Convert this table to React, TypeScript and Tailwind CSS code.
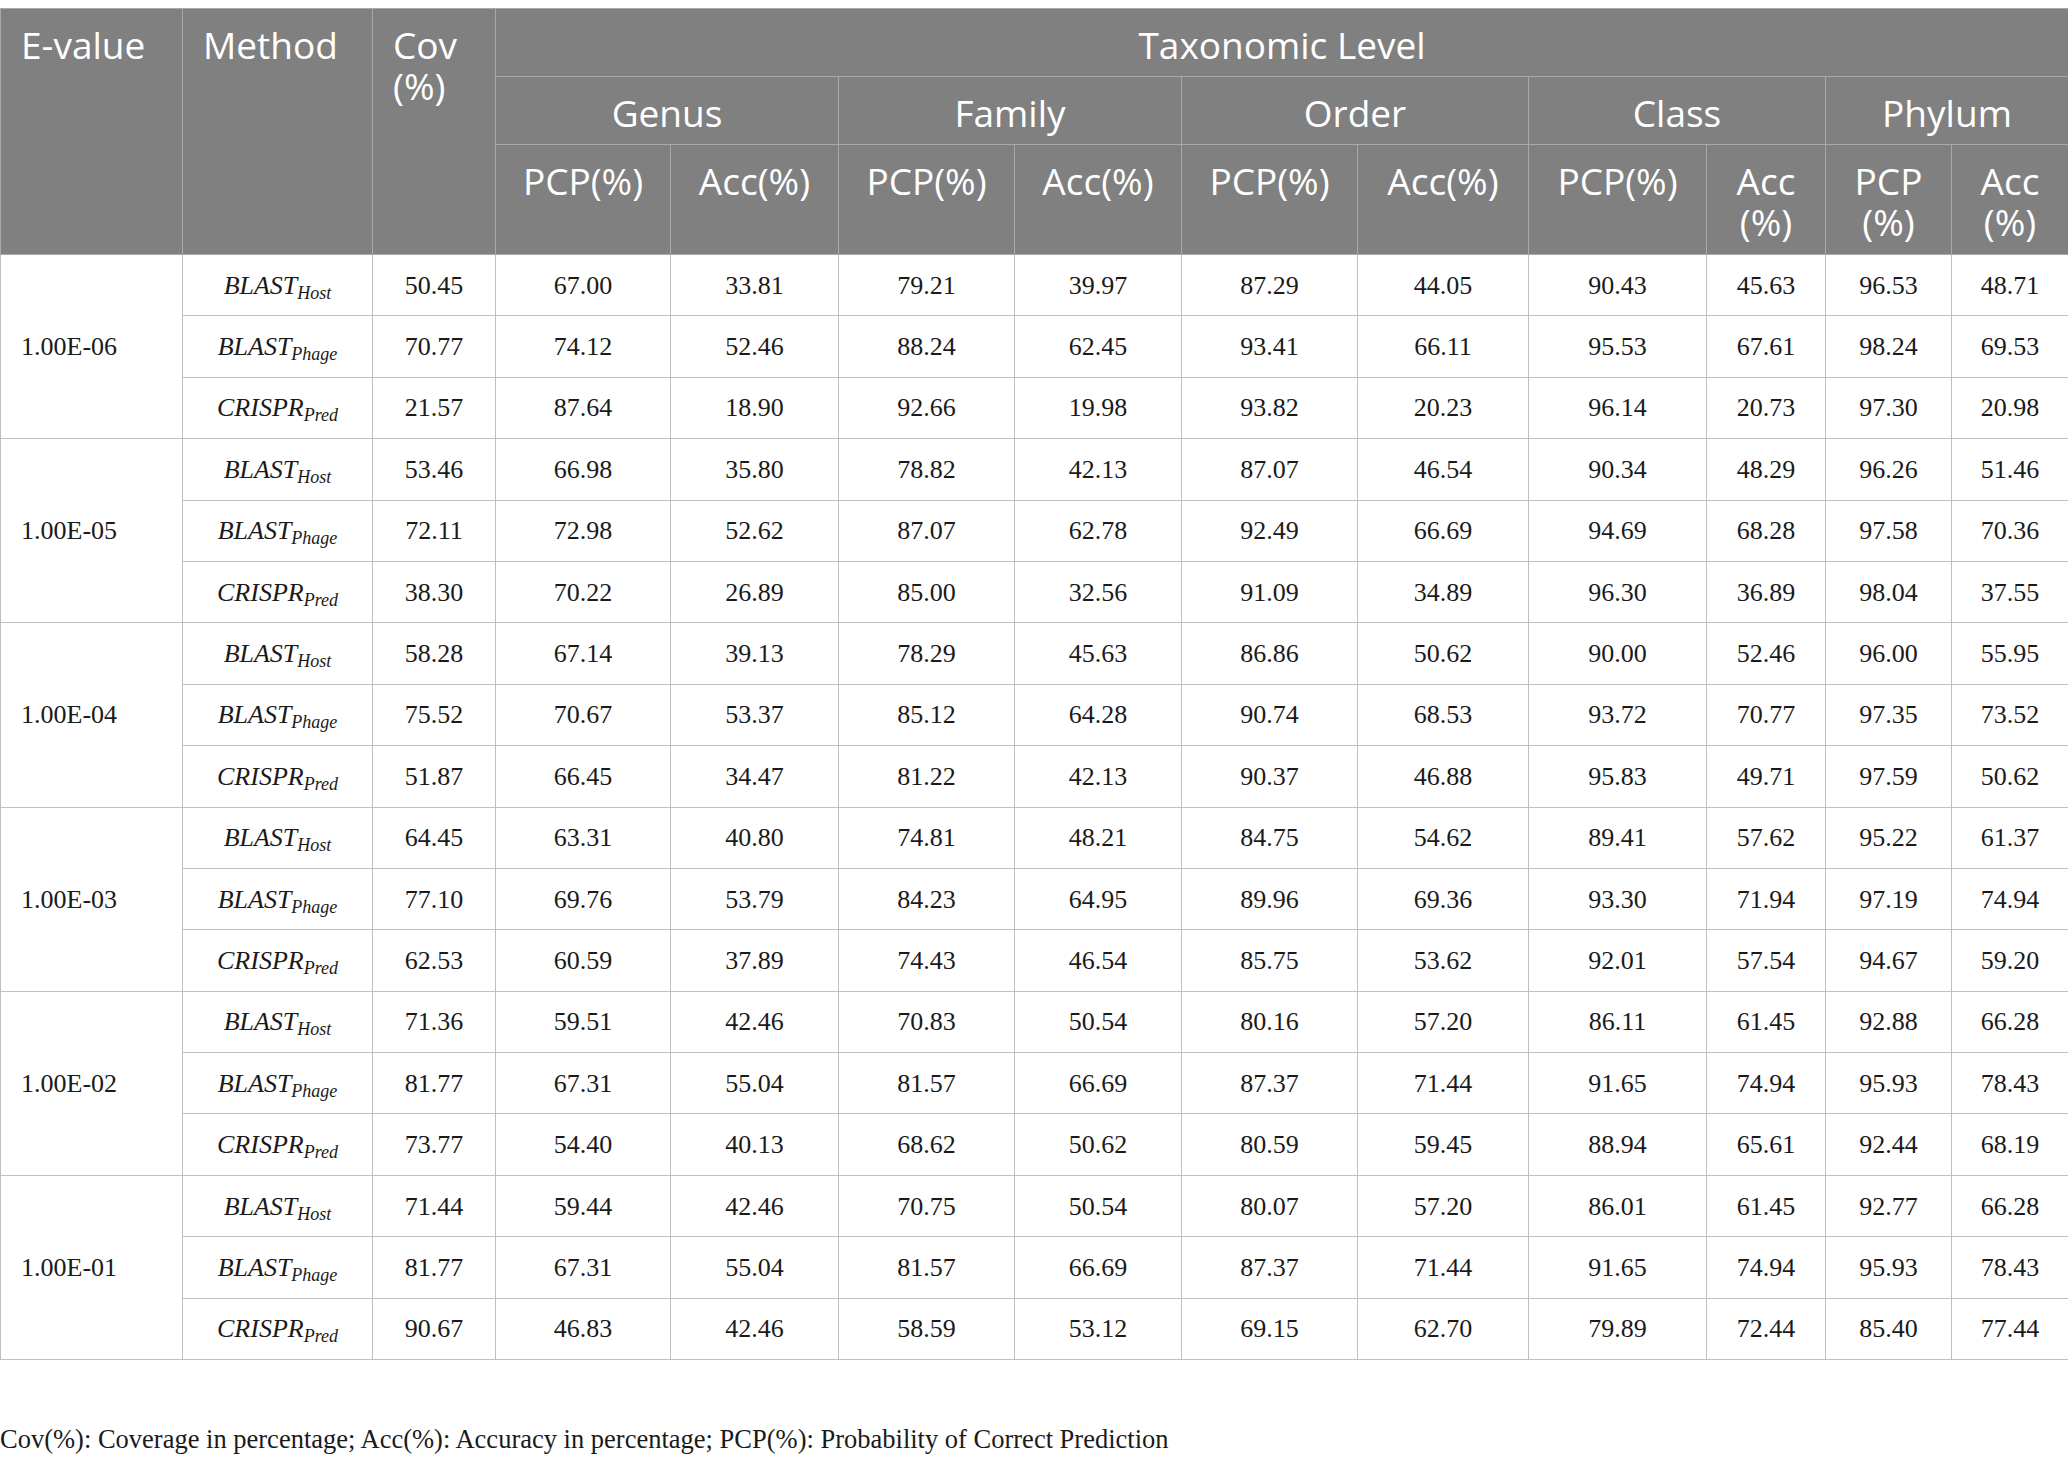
const rows: { evalue: string; data: string[][] }[] = [
  {
    evalue: '1.00E-06',
    data: [
      ['50.45', '67.00', '33.81', '79.21', '39.97', '87.29', '44.05', '90.43', '45.63', '96.53', '48.71'],
      ['70.77', '74.12', '52.46', '88.24', '62.45', '93.41', '66.11', '95.53', '67.61', '98.24', '69.53'],
      ['21.57', '87.64', '18.90', '92.66', '19.98', '93.82', '20.23', '96.14', '20.73', '97.30', '20.98'],
    ],
  },
  {
    evalue: '1.00E-05',
    data: [
      ['53.46', '66.98', '35.80', '78.82', '42.13', '87.07', '46.54', '90.34', '48.29', '96.26', '51.46'],
      ['72.11', '72.98', '52.62', '87.07', '62.78', '92.49', '66.69', '94.69', '68.28', '97.58', '70.36'],
      ['38.30', '70.22', '26.89', '85.00', '32.56', '91.09', '34.89', '96.30', '36.89', '98.04', '37.55'],
    ],
  },
  {
    evalue: '1.00E-04',
    data: [
      ['58.28', '67.14', '39.13', '78.29', '45.63', '86.86', '50.62', '90.00', '52.46', '96.00', '55.95'],
      ['75.52', '70.67', '53.37', '85.12', '64.28', '90.74', '68.53', '93.72', '70.77', '97.35', '73.52'],
      ['51.87', '66.45', '34.47', '81.22', '42.13', '90.37', '46.88', '95.83', '49.71', '97.59', '50.62'],
    ],
  },
  {
    evalue: '1.00E-03',
    data: [
      ['64.45', '63.31', '40.80', '74.81', '48.21', '84.75', '54.62', '89.41', '57.62', '95.22', '61.37'],
      ['77.10', '69.76', '53.79', '84.23', '64.95', '89.96', '69.36', '93.30', '71.94', '97.19', '74.94'],
      ['62.53', '60.59', '37.89', '74.43', '46.54', '85.75', '53.62', '92.01', '57.54', '94.67', '59.20'],
    ],
  },
  {
    evalue: '1.00E-02',
    data: [
      ['71.36', '59.51', '42.46', '70.83', '50.54', '80.16', '57.20', '86.11', '61.45', '92.88', '66.28'],
      ['81.77', '67.31', '55.04', '81.57', '66.69', '87.37', '71.44', '91.65', '74.94', '95.93', '78.43'],
      ['73.77', '54.40', '40.13', '68.62', '50.62', '80.59', '59.45', '88.94', '65.61', '92.44', '68.19'],
    ],
  },
  {
    evalue: '1.00E-01',
    data: [
      ['71.44', '59.44', '42.46', '70.75', '50.54', '80.07', '57.20', '86.01', '61.45', '92.77', '66.28'],
      ['81.77', '67.31', '55.04', '81.57', '66.69', '87.37', '71.44', '91.65', '74.94', '95.93', '78.43'],
      ['90.67', '46.83', '42.46', '58.59', '53.12', '69.15', '62.70', '79.89', '72.44', '85.40', '77.44'],
    ],
  },
];

const methods: [string, string][] = [
  ['BLAST', 'Host'],
  ['BLAST', 'Phage'],
  ['CRISPR', 'Pred'],
];

const colWidths = [182, 190, 123, 175, 168, 176, 167, 176, 171, 178, 119, 126, 117];

const levels = ['Genus', 'Family', 'Order', 'Class', 'Phylum'];

export default function App() {
  const th = 'border border-[#a9a9a9] align-top font-normal pt-[15px] px-[20px]';
  const td = 'border border-[#c0c0c0] text-center align-middle h-[61.4px] p-0';

  return (
    <div className="bg-white w-[2068px] min-h-[1466px] pt-[8px]">
      <table className="table-fixed border-collapse w-[2068px] leading-[41px]">
        <colgroup>
          {colWidths.map((w, i) => (
            <col key={i} style={{ width: w }} />
          ))}
        </colgroup>
        <thead className="bg-[#7f807f] text-white text-[37px] font-['Open_Sans',sans-serif]">
          <tr className="h-[68px]">
            <th rowSpan={3} className={`${th} text-left`}>E-value</th>
            <th rowSpan={3} className={`${th} text-left`}>Method</th>
            <th rowSpan={3} className={`${th} text-left`}>
              Cov
              <br />
              (%)
            </th>
            <th colSpan={10} className={`${th} text-center`}>Taxonomic Level</th>
          </tr>
          <tr className="h-[68px]">
            {levels.map((l) => (
              <th key={l} colSpan={2} className={`${th} text-center`}>{l}</th>
            ))}
          </tr>
          <tr className="h-[110px]">
            <th className={`${th} text-center px-0`}>PCP(%)</th>
            <th className={`${th} text-center px-0`}>Acc(%)</th>
            <th className={`${th} text-center px-0`}>PCP(%)</th>
            <th className={`${th} text-center px-0`}>Acc(%)</th>
            <th className={`${th} text-center px-0`}>PCP(%)</th>
            <th className={`${th} text-center px-0`}>Acc(%)</th>
            <th className={`${th} text-center px-0`}>PCP(%)</th>
            <th className={`${th} text-center px-0`}>
              Acc
              <br />
              (%)
            </th>
            <th className={`${th} text-center px-0`}>
              PCP
              <br />
              (%)
            </th>
            <th className={`${th} text-center px-0`}>
              Acc
              <br />
              (%)
            </th>
          </tr>
        </thead>
        <tbody className="text-[#1a1a1a] text-[26px] font-['Liberation_Serif',serif]">
          {rows.map((group) =>
            group.data.map((vals, i) => (
              <tr key={`${group.evalue}-${i}`}>
                {i === 0 && (
                  <td rowSpan={3} className="border border-[#c0c0c0] align-middle text-left pl-[20px]">
                    {group.evalue}
                  </td>
                )}
                <td className={`${td} italic`}>
                  {methods[i][0]}
                  <sub className="text-[18px] relative top-[5px] leading-none align-baseline">{methods[i][1]}</sub>
                </td>
                {vals.map((v, j) => (
                  <td key={j} className={td}>{v}</td>
                ))}
              </tr>
            ))
          )}
        </tbody>
      </table>
      <p className="mt-[64px] text-[26.5px] text-[#1a1a1a] font-['Liberation_Serif',serif] leading-[30px]">
        Cov(%): Coverage in percentage; Acc(%): Accuracy in percentage; PCP(%): Probability of Correct Prediction
      </p>
    </div>
  );
}
